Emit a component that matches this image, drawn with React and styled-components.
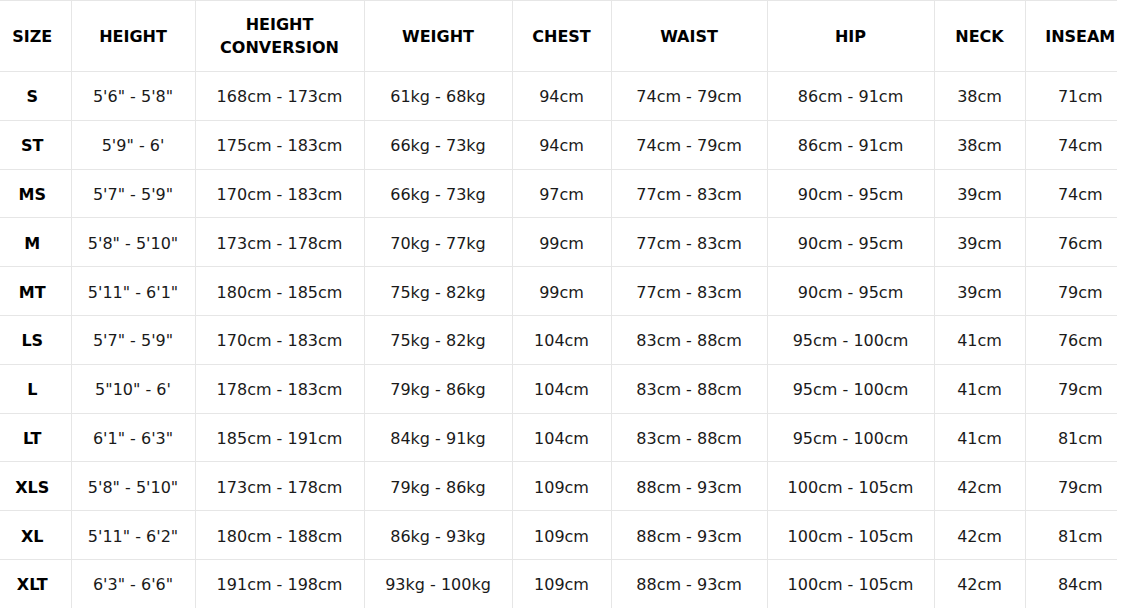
import React from 'react'
import styled, { createGlobalStyle } from 'styled-components'

const GlobalStyle = createGlobalStyle`
  html, body {
    margin: 0;
    padding: 0;
    background: #ffffff;
  }
  body {
    font-family: 'DejaVu Sans', 'Noto Sans', sans-serif;
    overflow: hidden;
  }
`

const COLUMNS = [
  { label: 'SIZE', width: 71 },
  { label: 'HEIGHT', width: 124 },
  { label: 'HEIGHT CONVERSION', width: 169 },
  { label: 'WEIGHT', width: 148 },
  { label: 'CHEST', width: 99 },
  { label: 'WAIST', width: 156 },
  { label: 'HIP', width: 167 },
  { label: 'NECK', width: 91 },
  { label: 'INSEAM', width: 110 },
]

const ROWS = [
  ['S', '5\'6" - 5\'8"', '168cm - 173cm', '61kg - 68kg', '94cm', '74cm - 79cm', '86cm - 91cm', '38cm', '71cm'],
  ['ST', '5\'9" - 6\'', '175cm - 183cm', '66kg - 73kg', '94cm', '74cm - 79cm', '86cm - 91cm', '38cm', '74cm'],
  ['MS', '5\'7" - 5\'9"', '170cm - 183cm', '66kg - 73kg', '97cm', '77cm - 83cm', '90cm - 95cm', '39cm', '74cm'],
  ['M', '5\'8" - 5\'10"', '173cm - 178cm', '70kg - 77kg', '99cm', '77cm - 83cm', '90cm - 95cm', '39cm', '76cm'],
  ['MT', '5\'11" - 6\'1"', '180cm - 185cm', '75kg - 82kg', '99cm', '77cm - 83cm', '90cm - 95cm', '39cm', '79cm'],
  ['LS', '5\'7" - 5\'9"', '170cm - 183cm', '75kg - 82kg', '104cm', '83cm - 88cm', '95cm - 100cm', '41cm', '76cm'],
  ['L', '5"10" - 6\'', '178cm - 183cm', '79kg - 86kg', '104cm', '83cm - 88cm', '95cm - 100cm', '41cm', '79cm'],
  ['LT', '6\'1" - 6\'3"', '185cm - 191cm', '84kg - 91kg', '104cm', '83cm - 88cm', '95cm - 100cm', '41cm', '81cm'],
  ['XLS', '5\'8" - 5\'10"', '173cm - 178cm', '79kg - 86kg', '109cm', '88cm - 93cm', '100cm - 105cm', '42cm', '79cm'],
  ['XL', '5\'11" - 6\'2"', '180cm - 188cm', '86kg - 93kg', '109cm', '88cm - 93cm', '100cm - 105cm', '42cm', '81cm'],
  ['XLT', '6\'3" - 6\'6"', '191cm - 198cm', '93kg - 100kg', '109cm', '88cm - 93cm', '100cm - 105cm', '42cm', '84cm'],
]

const Scroller = styled.div`
  width: 1117px;
  overflow: hidden;
`

const Table = styled.table`
  width: 1135px;
  table-layout: fixed;
  border-collapse: collapse;
  border-top: 1px solid #e6e6e6;
  color: #111111;
`

const HeadCell = styled.th`
  height: 70px;
  padding: 0 4px;
  font-size: 16px;
  font-weight: 700;
  line-height: 23px;
  text-align: center;
  color: #000000;
  border-bottom: 1px solid #e6e6e6;
  border-left: 1px solid #e6e6e6;
  &:first-child {
    border-left: none;
    padding-right: 10px;
  }
`

const Row = styled.tr`
  height: 48.8px;
  border-bottom: 1px solid #e6e6e6;
`

const Cell = styled.td`
  padding: 2px 4px 0;
  font-size: 16px;
  font-weight: ${(props) => (props.strong ? 700 : 400)};
  color: ${(props) => (props.strong ? '#000000' : '#1a1a1a')};
  text-align: center;
  white-space: nowrap;
  border-left: 1px solid #e6e6e6;
  &:first-child {
    border-left: none;
    padding-right: 10px;
  }
`

const App = () => {
  return (
    <>
      <GlobalStyle />
      <Scroller>
        <Table>
          <colgroup>
            {COLUMNS.map((col) => (
              <col key={col.label} style={{ width: col.width }} />
            ))}
          </colgroup>
          <thead>
            <tr>
              {COLUMNS.map((col) => (
                <HeadCell key={col.label}>{col.label}</HeadCell>
              ))}
            </tr>
          </thead>
          <tbody>
            {ROWS.map((row) => (
              <Row key={row[0]}>
                {row.map((val, i) => (
                  <Cell key={i} strong={i === 0}>
                    {val}
                  </Cell>
                ))}
              </Row>
            ))}
          </tbody>
        </Table>
      </Scroller>
    </>
  )
}

export default App
